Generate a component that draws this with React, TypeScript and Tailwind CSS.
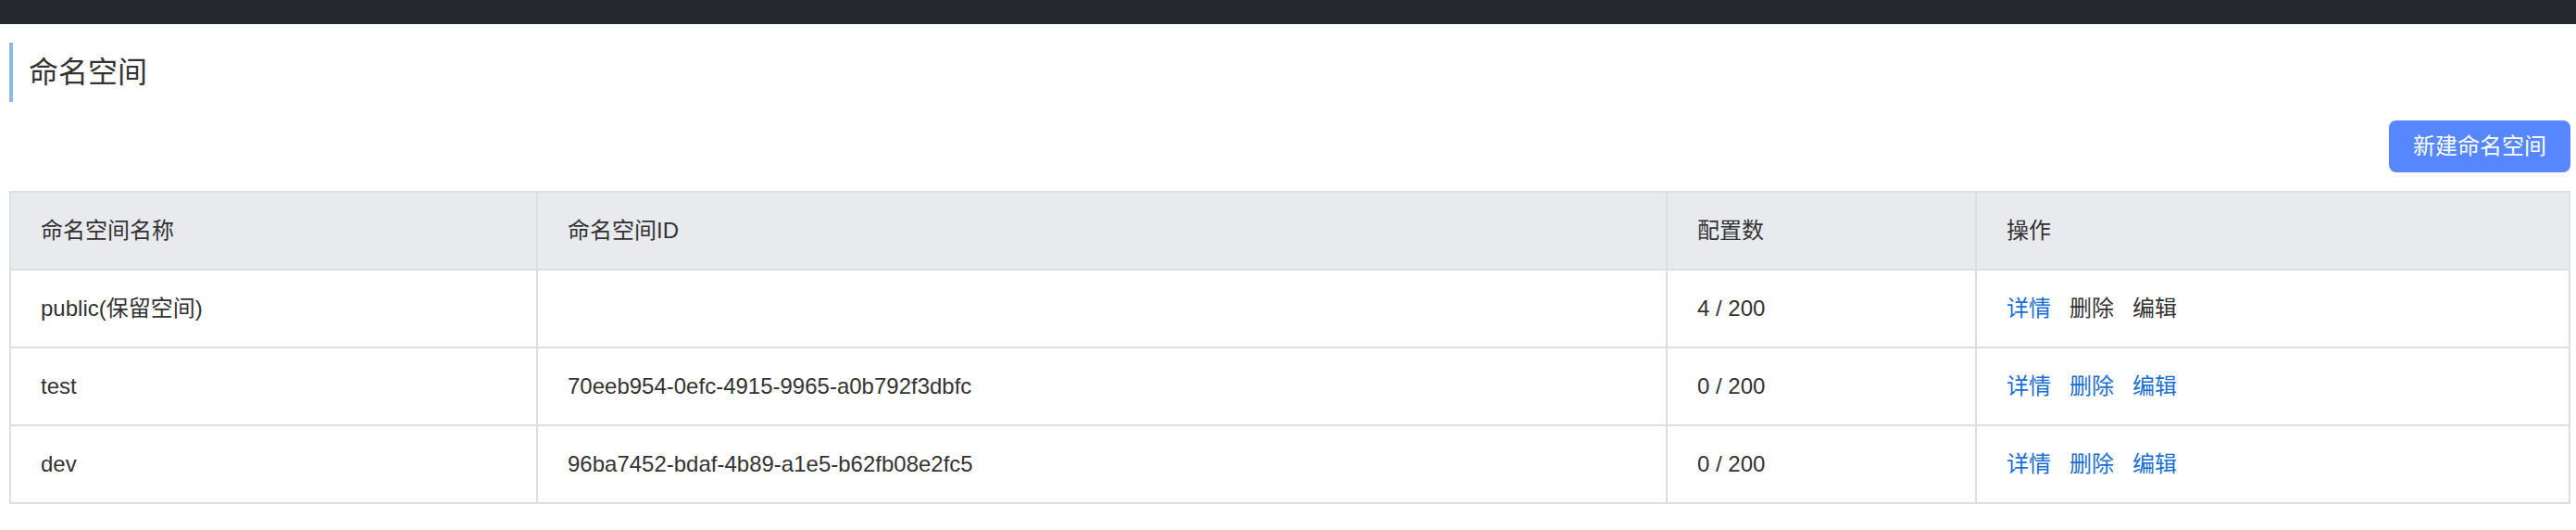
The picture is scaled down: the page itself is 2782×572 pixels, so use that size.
import React from "react";

type Row = {
  name: string;
  id: string;
  count: string;
  reserved?: boolean;
};

const rows: Row[] = [
  { name: "public(保留空间)", id: "", count: "4 / 200", reserved: true },
  { name: "test", id: "70eeb954-0efc-4915-9965-a0b792f3dbfc", count: "0 / 200" },
  { name: "dev", id: "96ba7452-bdaf-4b89-a1e5-b62fb08e2fc5", count: "0 / 200" },
];

const font = {
  fontFamily:
    '"Liberation Sans", "Noto Sans CJK SC", "Noto Sans", sans-serif',
};

function App() {
  return (
    <div className="min-h-screen bg-white text-[#333]" style={font}>
      <div className="h-[26px] bg-[#25292e]"></div>

      <div className="pl-[10px] pr-[6px] pt-[20px]">
        <div className="flex h-[64px] items-center border-l-4 border-[#8bbbe3] pl-[17px] text-[32px]">
          命名空间
        </div>

        <div className="mt-[20px] flex justify-end">
          <button className="h-[56px] rounded-lg bg-[#5687ff] px-[26px] text-[24px] text-white">
            新建命名空间
          </button>
        </div>

        <div className="mt-[20px] border-2 border-b-0 border-[#dcdee2] text-[24px]">
          <div className="grid h-[84px] grid-cols-[569px_1220px_334px_1fr] border-b-2 border-[#dcdee2] bg-[#e9eaee]">
            <div className="flex items-center border-r-2 border-[#dcdee2] pl-8">
              命名空间名称
            </div>
            <div className="flex items-center border-r-2 border-[#dcdee2] pl-8">
              命名空间ID
            </div>
            <div className="flex items-center border-r-2 border-[#dcdee2] pl-8">
              配置数
            </div>
            <div className="flex items-center pl-8">操作</div>
          </div>

          {rows.map((row) => (
            <div
              key={row.name}
              className="grid h-[84px] grid-cols-[569px_1220px_334px_1fr] border-b-2 border-[#dcdee2]"
            >
              <div className="flex items-center border-r-2 border-[#dcdee2] pl-8">
                {row.name}
              </div>
              <div className="flex items-center border-r-2 border-[#dcdee2] pl-8">
                {row.id}
              </div>
              <div className="flex items-center border-r-2 border-[#dcdee2] pl-8">
                {row.count}
              </div>
              <div className="flex items-center gap-[20px] pl-8">
                <span className="text-[#1a6fd6]">详情</span>
                <span className={row.reserved ? "text-[#333]" : "text-[#1a6fd6]"}>
                  删除
                </span>
                <span className={row.reserved ? "text-[#333]" : "text-[#1a6fd6]"}>
                  编辑
                </span>
              </div>
            </div>
          ))}
        </div>
      </div>
    </div>
  );
}

export default App;
